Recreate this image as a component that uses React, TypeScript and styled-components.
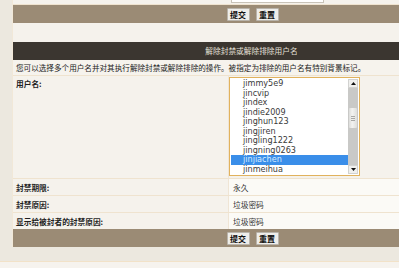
import React from "react";
import styled, { createGlobalStyle } from "styled-components";

// ── Global ───────────────────────────────────────────────────────

const GlobalStyle = createGlobalStyle`
  html, body {
    margin: 0;
    padding: 0;
    background: #ece8df;
    overflow: hidden;
  }
  body {
    font-family: "DejaVu Sans", "Noto Sans CJK SC", sans-serif;
    color: #222;
  }
`;

// ── Styled ───────────────────────────────────────────────────────

const Page = styled.div`
  display: flex;
  flex-direction: column;
  width: 399px;
  height: 268px;
  overflow: hidden;
`;

const Panel = styled.div`
  margin-left: 12px;
  width: 478px;
  flex-shrink: 0;
  display: flex;
  flex-direction: column;
  background: #f5f2ec;
  border-left: 1px solid #f1e8d8;
  box-sizing: border-box;
`;

const TopRow = styled.div`
  display: grid;
  grid-template-columns: 216px 1fr;
  height: 5px;
  border-bottom: 1px solid #efe3cf;
  box-sizing: border-box;
`;

const InputStub = styled.div`
  margin-left: 2px;
  width: 91px;
  height: 2px;
  background: #fff;
  border: 1px solid #c9c3b8;
  border-top: none;
`;

const ButtonBar = styled.div`
  display: flex;
  justify-content: center;
  align-items: center;
  gap: 6px;
  height: 18px;
  background: #9b8b75;
  padding-left: 2px;
`;

const Button = styled.button`
  height: 13px;
  padding: 0 2px;
  margin: 0;
  border: 1px solid #b9b4ab;
  border-radius: 1px;
  background: #eeedea;
  font-family: "Noto Sans CJK SC", sans-serif;
  font-size: 8px;
  font-weight: 700;
  line-height: 11px;
  color: #111;
  min-width: 23px;
`;

const Spacer = styled.div`
  height: 19px;
`;

const Header = styled.div`
  height: 18px;
  background: #3b3630;
  color: #e4e0d8;
  font-family: "Noto Sans CJK SC", sans-serif;
  font-size: 7.7px;
  line-height: 18px;
  text-align: center;
`;

const Description = styled.div`
  height: 15px;
  padding-left: 3px;
  font-family: "Noto Sans CJK SC", sans-serif;
  font-size: 7.6px;
  line-height: 15px;
  color: #222;
  white-space: nowrap;
  background: #f6f3ed;
`;

const Row = styled.div<{ $height: number }>`
  display: grid;
  grid-template-columns: 216px 1fr;
  height: ${({ $height }) => $height}px;
  border-top: 1px solid #efe3cf;
  box-sizing: border-box;
`;

const LabelCell = styled.div<{ $top?: boolean }>`
  padding: ${({ $top }) => ($top ? "2px 0 0 3px" : "0 0 0 3px")};
  display: flex;
  align-items: ${({ $top }) => ($top ? "flex-start" : "center")};
  font-family: "Noto Sans CJK SC", sans-serif;
  font-size: 7.7px;
  font-weight: 700;
  color: #1e1e1e;
  border-right: 1px solid #efe5d5;
`;

const ValueCell = styled.div<{ $light?: boolean }>`
  display: flex;
  align-items: center;
  padding-left: 4px;
  background: ${({ $light }) => ($light ? "#fbfaf6" : "transparent")};
  font-family: "Noto Sans CJK SC", sans-serif;
  font-size: 7.7px;
  color: #333;
`;

const SelectCell = styled.div`
  padding: 1px 0 0 0;
`;

const SelectBox = styled.div`
  width: 131px;
  height: 99px;
  box-sizing: border-box;
  border: 1px solid #e1b25d;
  background: #fff;
  display: flex;
  padding: 1px;
`;

const OptionList = styled.div`
  flex: 1;
  display: flex;
  flex-direction: column;
  overflow: hidden;
`;

const Option = styled.div<{ $selected?: boolean }>`
  height: 9.5px;
  flex-shrink: 0;
  padding-left: 12px;
  font-family: "DejaVu Sans", sans-serif;
  font-size: 8.1px;
  line-height: 9.5px;
  color: ${({ $selected }) => ($selected ? "#d8ecff" : "#3a3a3a")};
  background: ${({ $selected }) => ($selected ? "#3a8ee9" : "transparent")};
`;

const Scrollbar = styled.div`
  width: 10px;
  display: flex;
  flex-direction: column;
  background: #c9c9c7;
`;

const ScrollButton = styled.div`
  height: 9px;
  flex-shrink: 0;
  background: #f0f0ee;
  border: 1px solid #d2d2d0;
  box-sizing: border-box;
  display: flex;
  align-items: center;
  justify-content: center;
`;

const Track = styled.div`
  flex: 1;
  display: flex;
  flex-direction: column;
  padding-top: 20px;
`;

const Thumb = styled.div`
  height: 20px;
  margin: 0 1px;
  background: linear-gradient(to right, #dcdcda, #f3f3f1 40%, #dededc);
  border-radius: 1px;
  display: flex;
  flex-direction: column;
  align-items: center;
  justify-content: center;
  gap: 1px;
`;

const Grip = styled.div`
  width: 4px;
  height: 1px;
  background: #a8a8a6;
`;

const Band = styled.div`
  height: 14px;
  flex-shrink: 0;
`;

const Footer = styled.div`
  flex: 1;
  border-top: 1px solid #f2e2c8;
  background: #f6f3ee;
`;

// ── Parts ────────────────────────────────────────────────────────

function Arrow({ up }: { up?: boolean }) {
  return (
    <svg width="5" height="3" viewBox="0 0 5 3">
      <polygon points={up ? "0,3 5,3 2.5,0" : "0,0 5,0 2.5,3"} fill="#111" />
    </svg>
  );
}

const USERS = [
  "jimmy5e9",
  "jincvip",
  "jindex",
  "jindie2009",
  "jinghun123",
  "jingjiren",
  "jingling1222",
  "jingning0263",
  "jinjiachen",
  "jinmeihua",
];

function Buttons() {
  return (
    <ButtonBar>
      <Button type="button">提交</Button>
      <Button type="button">重置</Button>
    </ButtonBar>
  );
}

// ── Component ────────────────────────────────────────────────────

export default function App() {
  return (
    <>
      <GlobalStyle />
      <Page>
        <Panel>
          <TopRow>
            <div />
            <div>
              <InputStub />
            </div>
          </TopRow>
          <Buttons />
          <Spacer />

          <Header>解除封禁或解除排除用户名</Header>
          <Description>
            您可以选择多个用户名并对其执行解除封禁或解除排除的操作。被指定为排除的用户名有特别背景标记。
          </Description>

          <Row $height={103}>
            <LabelCell $top>用户名:</LabelCell>
            <SelectCell>
              <SelectBox>
                <OptionList>
                  {USERS.map((u) => (
                    <Option key={u} $selected={u === "jinjiachen"}>
                      {u}
                    </Option>
                  ))}
                </OptionList>
                <Scrollbar>
                  <ScrollButton>
                    <Arrow up />
                  </ScrollButton>
                  <Track>
                    <Thumb>
                      <Grip />
                      <Grip />
                      <Grip />
                    </Thumb>
                  </Track>
                  <ScrollButton>
                    <Arrow />
                  </ScrollButton>
                </Scrollbar>
              </SelectBox>
            </SelectCell>
          </Row>
          <Row $height={17}>
            <LabelCell>封禁期限:</LabelCell>
            <ValueCell $light>永久</ValueCell>
          </Row>
          <Row $height={17}>
            <LabelCell>封禁原因:</LabelCell>
            <ValueCell $light>垃圾密码</ValueCell>
          </Row>
          <Row $height={17}>
            <LabelCell>显示给被封者的封禁原因:</LabelCell>
            <ValueCell $light>垃圾密码</ValueCell>
          </Row>
          <Buttons />
        </Panel>
        <Band />
        <Footer />
      </Page>
    </>
  );
}
